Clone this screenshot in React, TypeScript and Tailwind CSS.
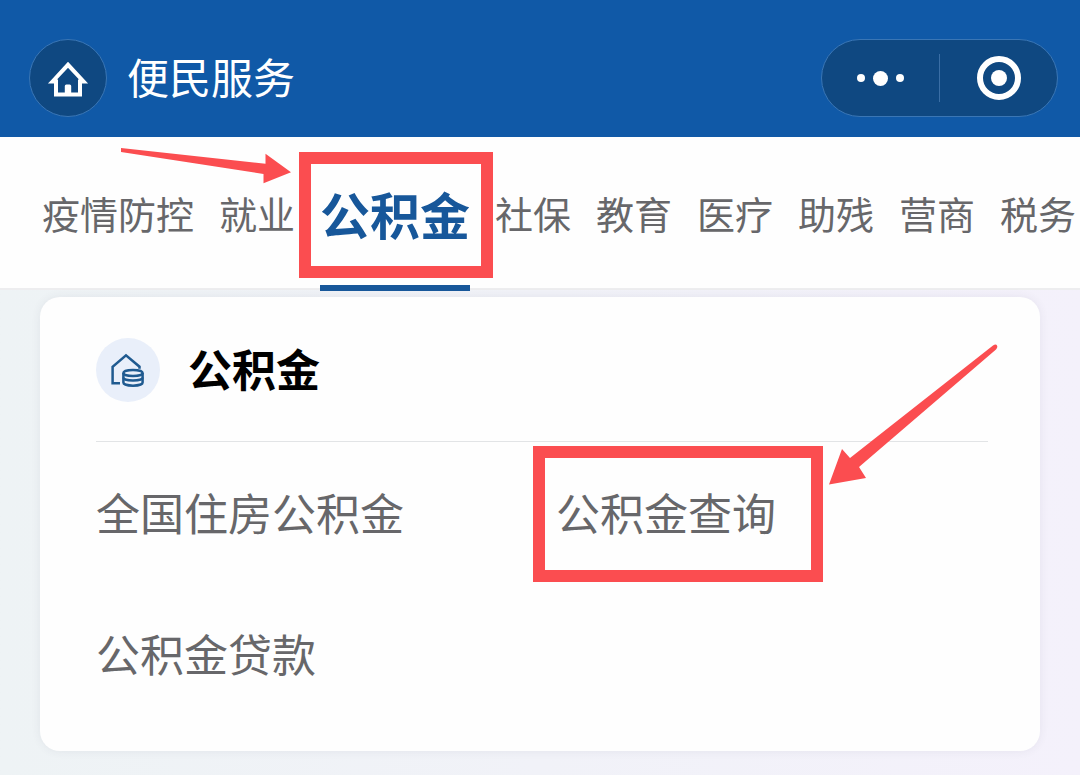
const tabs = [
  "疫情防控",
  "就业",
  "公积金",
  "社保",
  "教育",
  "医疗",
  "助残",
  "营商",
  "税务",
];

const services = ["全国住房公积金", "公积金查询", "公积金贷款"];

function HomeIcon() {
  return (
    <svg aria-hidden width="44" height="40" viewBox="0 0 44 40" fill="none">
      <path
        d="M6.5 23.5 22 6.8l15.5 16.7H34V36.5H10V23.5Z"
        stroke="#fff"
        strokeWidth="4"
        strokeLinejoin="miter"
      />
      <path d="M18.8 37V28q0-1.5 1.5-1.5h3.4q1.5 0 1.5 1.5V37Z" fill="#fff" />
    </svg>
  );
}

function FundIcon() {
  return (
    <svg
      aria-hidden
      width="40"
      height="38"
      viewBox="0 0 40 38"
      fill="none"
      stroke="#1f5a90"
      strokeWidth="2.5"
    >
      <path d="M12 32.3H4.6V15.8L18 4.3l13.5 11.4v2" />
      <ellipse cx="25" cy="22" rx="9.6" ry="3" />
      <path d="M15.4 22v9.5c0 1.9 4.3 3.2 9.6 3.2s9.6-1.3 9.6-3.2V22" />
      <path d="M15.4 26.6c0 1.8 4.3 3 9.6 3s9.6-1.2 9.6-3" />
    </svg>
  );
}

function Header() {
  return (
    <header className="flex items-center justify-between bg-[#1059a7] pt-[39px] pr-[22px] pb-5 pl-[29px]">
      <div className="flex items-center gap-5">
        <button
          type="button"
          aria-label="首页"
          className="flex size-[78px] items-center justify-center rounded-full border border-[#3a76b5] bg-[#0f4881]"
        >
          <HomeIcon />
        </button>
        <h1 className="pb-1 text-[42px] leading-[60px] text-white">便民服务</h1>
      </div>

      <div className="flex h-[78px] w-[237px] items-center rounded-full border border-[#3a76b5] bg-[#0f4881]">
        <button
          type="button"
          aria-label="更多"
          className="flex h-full flex-1 items-center justify-center gap-2"
        >
          <span className="size-2 rounded-full bg-white" />
          <span className="size-[15px] rounded-full bg-white" />
          <span className="size-2 rounded-full bg-white" />
        </button>
        <span className="h-12 w-px bg-[#3a6ea5]" />
        <button
          type="button"
          aria-label="关闭"
          className="flex h-full flex-1 items-center justify-center"
        >
          <span className="flex size-11 items-center justify-center rounded-full border-6 border-white">
            <span className="size-4 rounded-full bg-white" />
          </span>
        </button>
      </div>
    </header>
  );
}

function TabBar() {
  return (
    <nav className="flex gap-[25px] border-b-2 border-[#ededef] bg-[#fefefe] pt-[46px] pb-[45px] pl-[42px] text-[38px] leading-[60px] whitespace-nowrap text-[#67676a]">
      {tabs.map((tab) =>
        tab === "公积金" ? (
          <a
            key={tab}
            href="#fund"
            aria-current="page"
            className="relative shrink-0 text-[50px] font-bold text-[#17579a]"
          >
            {tab}
            <span className="absolute inset-x-0 -bottom-12 h-1.5 bg-[#17579a]" />
            {/* highlight frame and the arrow pointing at it */}
            <span className="pointer-events-none absolute -top-[31px] -right-[23px] -left-[21px] h-[126px] border-12 border-[#fb4d50]" />
            <svg
              aria-hidden
              className="pointer-events-none absolute -top-[35px] -left-[199px]"
              width="170"
              height="36"
              viewBox="0 0 170 36"
              fill="#fb4d50"
            >
              <path d="M0 0 144.5 15.7V5.7L170 24.3 142.5 35.3V26L0 4Z" />
            </svg>
          </a>
        ) : (
          <a key={tab} href="#tab" className="shrink-0">
            {tab}
          </a>
        ),
      )}
    </nav>
  );
}

function FundCard() {
  return (
    <section
      id="fund"
      className="rounded-[20px] bg-[#fefefe] pt-[41px] pr-[52px] pb-[68px] pl-14 shadow-[0_0_10px_rgba(60,60,90,0.08)]"
    >
      <div className="flex items-center gap-7">
        <span className="flex size-16 items-center justify-center rounded-full bg-[#e9effa]">
          <FundIcon />
        </span>
        <h2 className="pb-1 text-[44px] leading-[60px] font-bold text-black">
          公积金
        </h2>
      </div>

      <ul className="mt-[39px] grid grid-cols-2 gap-x-7 gap-y-[81px] border-t border-[#e2e4e6] pt-10 text-[44px] leading-[60px] whitespace-nowrap text-[#67676a]">
        {services.map((name) => (
          <li key={name}>
            <a href="#service" className="relative inline-block">
              {name}
              {name === "公积金查询" && (
                <>
                  <span className="pointer-events-none absolute -top-9 -right-[47px] -left-[23px] h-[136px] border-12 border-[#fb4d50]" />
                  <svg
                    aria-hidden
                    className="pointer-events-none absolute -top-[138px] -right-[222px]"
                    width="169"
                    height="141"
                    viewBox="0 0 169 141"
                    fill="#fb4d50"
                  >
                    <path d="M164 1.5q3-2 4 0 1 2-1 4L30 123l7 11-37 6.5L13 105l8 9Z" />
                  </svg>
                </>
              )}
            </a>
          </li>
        ))}
      </ul>
    </section>
  );
}

export default function App() {
  return (
    <div className="min-h-screen overflow-hidden bg-linear-to-r from-[#eef3f5] to-[#f4f1fb] font-['Noto_Sans_CJK_SC',sans-serif]">
      <Header />
      <TabBar />
      <main className="px-10 pt-[7px] pb-6">
        <FundCard />
      </main>
    </div>
  );
}
